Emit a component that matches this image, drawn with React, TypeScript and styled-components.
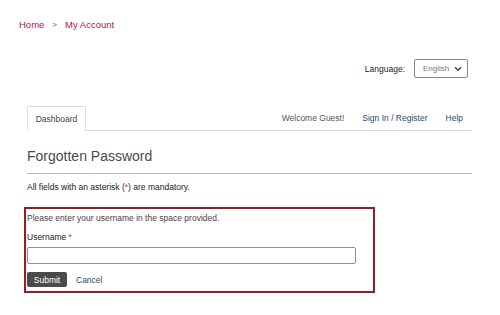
import * as React from 'react';
import styled, { createGlobalStyle } from 'styled-components';

const GlobalStyle = createGlobalStyle`
    html, body {
        margin: 0;
        padding: 0;
        background-color: #ffffff;
    }
    body {
        font-family: "Liberation Sans", Arial, sans-serif;
        font-size: 8.5px;
        color: #333333;
    }
`;

const Page = styled.div`
    width: 500px;
    height: 315px;
    box-sizing: border-box;
    padding: 19px 28px 0 19px;
    overflow: hidden;
`;

const Breadcrumb = styled.nav`
    display: flex;
    align-items: center;
    gap: 8px;
    font-size: 9.5px;
    line-height: 12px;
    color: #b3164f;
`;

const Crumb = styled.a`
    color: #b3164f;
    text-decoration: none;
`;

const Separator = styled.span`
    color: #555555;
    font-size: 8px;
`;

const Main = styled.div`
    margin-left: 8px;
`;

const LanguageRow = styled.div`
    display: flex;
    justify-content: flex-end;
    align-items: center;
    gap: 9px;
    margin-top: 28px;
    padding-right: 4px;
    color: #222222;
`;

const SelectBox = styled.div`
    display: flex;
    align-items: center;
    justify-content: space-between;
    box-sizing: border-box;
    width: 54px;
    height: 19px;
    padding: 0 5px 0 8px;
    border: 1px solid #8a8a8a;
    border-radius: 2px;
    color: #777777;
    font-size: 8px;
`;

const TabBar = styled.div`
    display: flex;
    align-items: flex-end;
    margin-top: 28px;
    border-bottom: 1px solid #dddddd;
`;

const Tab = styled.div`
    box-sizing: border-box;
    width: 59px;
    height: 25px;
    margin-bottom: -1px;
    display: flex;
    align-items: center;
    justify-content: center;
    border: 1px solid #dddddd;
    border-bottom: 1px solid #ffffff;
    background-color: #ffffff;
    color: #444444;
`;

const TopLinks = styled.div`
    margin-left: auto;
    display: flex;
    align-items: center;
    gap: 18px;
    height: 24px;
    padding-right: 9px;
`;

const Greeting = styled.span`
    color: #555555;
`;

const NavLink = styled.a`
    color: #2b4a6e;
    text-decoration: none;
`;

const Heading = styled.h1`
    margin: 17px 0 0;
    padding-bottom: 8px;
    font-size: 14px;
    line-height: 17px;
    font-weight: normal;
    color: #4a4a4a;
    border-bottom: 1px solid #b5b5b5;
`;

const Note = styled.p`
    margin: 8px 0 0;
    line-height: 11px;
    color: #222222;
`;

const Asterisk = styled.span`
    color: #c0392b;
`;

const FormBox = styled.form`
    box-sizing: border-box;
    width: 351px;
    margin: 14px 0 0 -3px;
    padding: 4px 17px 4px 1px;
    border: 2px solid #9b1c20;
`;

const Hint = styled.p`
    margin: 0;
    line-height: 11px;
    color: #444444;
`;

const Label = styled.label`
    display: block;
    margin-top: 8px;
    line-height: 11px;
    color: #222222;
`;

const TextInput = styled.input`
    display: block;
    box-sizing: border-box;
    width: 329px;
    height: 17px;
    margin-top: 4px;
    border: 1px solid #8f8f8f;
    border-radius: 2px;
    font-size: 9px;
`;

const Actions = styled.div`
    display: flex;
    align-items: center;
    gap: 9px;
    margin-top: 8px;
`;

const SubmitButton = styled.button`
    box-sizing: border-box;
    width: 40px;
    height: 15px;
    padding: 0;
    border: none;
    border-radius: 2px;
    background-color: #4a4a4a;
    color: #ffffff;
    font-family: "Liberation Sans", Arial, sans-serif;
    font-size: 8.5px;
`;

const CancelLink = styled.a`
    color: #2b4a6e;
    text-decoration: none;
`;

function Chevron() {
    return (
        <svg width="8" height="6" viewBox="0 0 8 6">
            <path d="M1 1.2 L4 4.2 L7 1.2" fill="none" stroke="#444444" strokeWidth="1.5" />
        </svg>
    );
}

function App() {
    return (
        <Page>
            <GlobalStyle />
            <Breadcrumb>
                <Crumb href="#">Home</Crumb>
                <Separator>&gt;</Separator>
                <Crumb href="#">My Account</Crumb>
            </Breadcrumb>
            <Main>
                <LanguageRow>
                    <span>Language:</span>
                    <SelectBox>
                        <span>English</span>
                        <Chevron />
                    </SelectBox>
                </LanguageRow>
                <TabBar>
                    <Tab>Dashboard</Tab>
                    <TopLinks>
                        <Greeting>Welcome Guest!</Greeting>
                        <NavLink href="#">Sign In / Register</NavLink>
                        <NavLink href="#">Help</NavLink>
                    </TopLinks>
                </TabBar>
                <Heading>Forgotten Password</Heading>
                <Note>
                    All fields with an asterisk (<Asterisk>*</Asterisk>) are mandatory.
                </Note>
                <FormBox onSubmit={(e) => e.preventDefault()}>
                    <Hint>Please enter your username in the space provided.</Hint>
                    <Label>
                        Username <Asterisk>*</Asterisk>
                    </Label>
                    <TextInput type="text" />
                    <Actions>
                        <SubmitButton type="submit">Submit</SubmitButton>
                        <CancelLink href="#">Cancel</CancelLink>
                    </Actions>
                </FormBox>
            </Main>
        </Page>
    );
}

export default App;
